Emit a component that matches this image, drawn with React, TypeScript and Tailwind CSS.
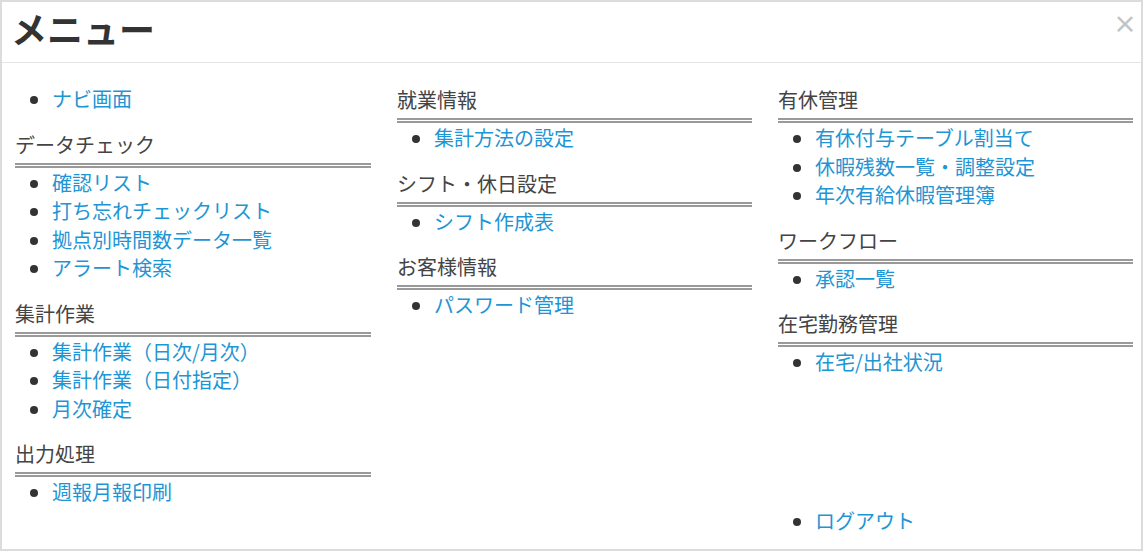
const font = { fontFamily: '"Noto Sans CJK JP", "Noto Sans", sans-serif' };

type Section = { title?: string; items: string[] };

const columns: Section[][] = [
  [
    { items: ["ナビ画面"] },
    { title: "データチェック", items: ["確認リスト", "打ち忘れチェックリスト", "拠点別時間数データ一覧", "アラート検索"] },
    { title: "集計作業", items: ["集計作業（日次/月次）", "集計作業（日付指定）", "月次確定"] },
    { title: "出力処理", items: ["週報月報印刷"] },
  ],
  [
    { title: "就業情報", items: ["集計方法の設定"] },
    { title: "シフト・休日設定", items: ["シフト作成表"] },
    { title: "お客様情報", items: ["パスワード管理"] },
  ],
  [
    { title: "有休管理", items: ["有休付与テーブル割当て", "休暇残数一覧・調整設定", "年次有給休暇管理簿"] },
    { title: "ワークフロー", items: ["承認一覧"] },
    { title: "在宅勤務管理", items: ["在宅/出社状況"] },
  ],
];

function LinkList({ items, top }: { items: string[]; top: boolean }) {
  return (
    <ul className={`list-disc pl-[37px] text-[#333] ${top ? "pt-px" : ""}`}>
      {items.map((item) => (
        <li key={item} className="text-[20px] leading-[28.5px]">
          <a href="#" className="text-[#1e95d4]">
            {item}
          </a>
        </li>
      ))}
    </ul>
  );
}

function MenuSection({ section, first }: { section: Section; first: boolean }) {
  return (
    <div className={first ? "" : "mt-4"}>
      {section.title && (
        <h4 className="text-[20px] leading-[30px] pb-[3px] text-[#444] border-b-[5px] border-double border-[#9a9a9a]">
          {section.title}
        </h4>
      )}
      <LinkList items={section.items} top={!!section.title} />
    </div>
  );
}

export default function App() {
  return (
    <div style={font} className="w-[1143px] h-[551px] bg-white border-2 border-[#dcdcdc] flex flex-col">
      <div className="h-[61px] shrink-0 border-b border-[#e5e5e5] flex items-center justify-between pl-[9px] pr-[4px]">
        <h3 className="text-[36px] font-bold text-[#333] leading-none pb-[8px]">メニュー</h3>
        <button className="text-[24px] font-bold text-[#c4c4c4] leading-none -mt-[18px]">×</button>
      </div>
      <div className="pt-[22px] pl-[13px] flex flex-col">
        <div className="grid grid-cols-[356px_355px_355px] gap-x-[26px]">
          {columns.map((col, ci) => (
            <div key={ci}>
              {col.map((s, si) => (
                <MenuSection key={si} section={s} first={si === 0} />
              ))}
            </div>
          ))}
        </div>
        <div className="grid grid-cols-[356px_355px_355px] gap-x-[26px]">
          <div className="col-start-3">
            <LinkList items={["ログアウト"]} top={false} />
          </div>
        </div>
      </div>
    </div>
  );
}
